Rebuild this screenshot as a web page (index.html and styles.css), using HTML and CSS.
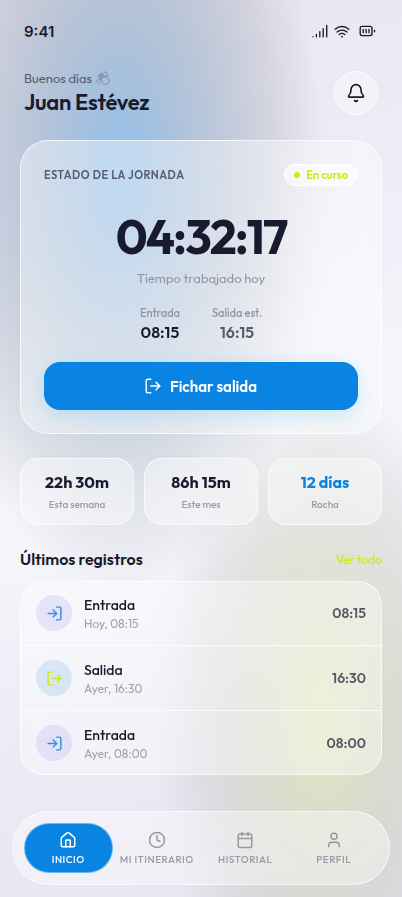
FILE: index.html
```html
<!DOCTYPE html>
<html lang="es">
<head>
<meta charset="utf-8">
<title>Jornada</title>
<link rel="stylesheet" href="styles.css">
</head>
<body>
<svg class="defs" width="0" height="0">
  <symbol id="log-in" viewBox="0 0 24 24"><path d="M15 3h4a2 2 0 0 1 2 2v14a2 2 0 0 1-2 2h-4"/><path d="m10 17 5-5-5-5"/><path d="M15 12H3"/></symbol>
  <symbol id="log-out" viewBox="0 0 24 24"><path d="M9 21H5a2 2 0 0 1-2-2V5a2 2 0 0 1 2-2h4"/><path d="m16 17 5-5-5-5"/><path d="M21 12H9"/></symbol>
</svg>
<div class="screen">
  <div class="status-bar">
    <span class="clock">9:41</span>
    <div class="status-icons">
      <svg class="signal" width="16" height="14" viewBox="0 0 16 14"><path d="M1 12.700v.1M4.400 10.500v2.300M7.800 7.700v5.100M11.200 4.700v8.100M14.700 1.400v11.400"/></svg>
      <svg class="wifi" width="16" height="14" viewBox="0 0 16 14"><path d="M1.200 5.200a10 10 0 0 1 13.600 0M3 8a7.400 7.400 0 0 1 10 0M5.200 10.500a4.400 4.400 0 0 1 5.600 0M7.700 12.700h.6"/></svg>
      <svg class="battery" width="17" height="12" viewBox="0 0 17 12"><rect x="1.200" y="1.400" width="11.800" height="9.200" rx="2"/><path d="M4.200 4.300v3.400M7.100 4.300v3.400M10 4.300v3.400M15.500 5.200v1.600"/></svg>
    </div>
  </div>

  <header class="header">
    <div>
      <div class="greeting">Buenos días
        <svg class="wave" width="14" height="14" viewBox="0 0 14 14"><path d="M4.500 8.200 2.400 5.600c-.6-.8.400-1.600 1.100-.8l2.400 2.700M5.900 7.500 3.700 3.900c-.5-.9.800-1.600 1.300-.7l2.300 3.500M7.300 6.700 5.600 3.300c-.4-.9.900-1.500 1.400-.6l2.500 4.100c.2-1.100.2-2.100 1.100-2.300 1-.2 1.300.6 1.100 1.500-.1 1.200 1.500 2.200 1.500 3.900 0 2-2 3.500-4.100 3.400-2.100-.1-3.300-1.700-5.600-4.300-.6-.8.400-1.600 1.100-.9l1.700 1.700M8.600.9c1.300.2 2.200.9 2.700 2.200M.8 8.900c.2 1.500 1.100 2.700 2.400 3.500"/></svg>
      </div>
      <h1 class="name">Juan Estévez</h1>
    </div>
    <button class="bell glass" aria-label="Avisos"><svg width="20" height="20" viewBox="0 0 24 24"><path d="M10.300 21a1.940 1.940 0 0 0 3.400 0"/><path d="M3.262 15.326A1 1 0 0 0 4 17h16a1 1 0 0 0 .74-1.673C19.410 13.956 18 12.499 18 8A6 6 0 0 0 6 8c0 4.499-1.411 5.956-2.738 7.326"/></svg></button>
  </header>

  <section class="glass workday">
    <div class="workday-head">
      <span class="workday-title">ESTADO DE LA JORNADA</span>
      <span class="pill"><i class="dot"></i>En curso</span>
    </div>
    <div class="timer">04:32:17</div>
    <div class="timer-note">Tiempo trabajado hoy</div>
    <div class="times">
      <div class="time"><span class="time-label">Entrada</span><span class="time-value">08:15</span></div>
      <div class="time"><span class="time-label">Salida est.</span><span class="time-value estimate">16:15</span></div>
    </div>
    <button class="clock-out"><svg width="18" height="18"><use href="#log-out"/></svg>Fichar salida</button>
  </section>

  <section class="stats">
    <div class="glass stat"><span class="stat-value">22h 30m</span><span class="stat-label">Esta semana</span></div>
    <div class="glass stat"><span class="stat-value">86h 15m</span><span class="stat-label">Este mes</span></div>
    <div class="glass stat"><span class="stat-value streak">12 días</span><span class="stat-label">Racha</span></div>
  </section>

  <div class="section-head"><h2>Últimos registros</h2><a class="more">Ver todo</a></div>

  <section class="glass log">
    <div class="entry">
      <span class="badge arrive"><svg width="17" height="17"><use href="#log-in"/></svg></span>
      <div class="entry-text"><span class="entry-title">Entrada</span><span class="entry-date">Hoy, 08:15</span></div>
      <span class="entry-time">08:15</span>
    </div>
    <div class="entry">
      <span class="badge leave"><svg width="17" height="17"><use href="#log-out"/></svg></span>
      <div class="entry-text"><span class="entry-title">Salida</span><span class="entry-date">Ayer, 16:30</span></div>
      <span class="entry-time">16:30</span>
    </div>
    <div class="entry">
      <span class="badge arrive"><svg width="17" height="17"><use href="#log-in"/></svg></span>
      <div class="entry-text"><span class="entry-title">Entrada</span><span class="entry-date">Ayer, 08:00</span></div>
      <span class="entry-time">08:00</span>
    </div>
  </section>

  <nav class="glass tabs">
    <a class="tab active"><svg width="18" height="18" viewBox="0 0 24 24"><path d="M15 21v-8a1 1 0 0 0-1-1h-4a1 1 0 0 0-1 1v8"/><path d="M3 10a2 2 0 0 1 .7-1.500l7-6a2 2 0 0 1 2.600 0l7 6A2 2 0 0 1 21 10v9a2 2 0 0 1-2 2H5a2 2 0 0 1-2-2z"/></svg><span>INICIO</span></a>
    <a class="tab"><svg width="18" height="18" viewBox="0 0 24 24"><circle cx="12" cy="12" r="10"/><path d="M12 6v6l4 2"/></svg><span>MI ITINERARIO</span></a>
    <a class="tab"><svg width="18" height="18" viewBox="0 0 24 24"><path d="M8 2v4M16 2v4M3 10h18"/><rect x="3" y="4" width="18" height="18" rx="2"/></svg><span>HISTORIAL</span></a>
    <a class="tab"><svg width="18" height="18" viewBox="0 0 24 24"><path d="M19 21v-2a4 4 0 0 0-4-4H9a4 4 0 0 0-4 4v2"/><circle cx="12" cy="7" r="4"/></svg><span>PERFIL</span></a>
  </nav>
</div>
</body>
</html>
```
FILE: styles.css
```css
* { box-sizing: border-box; margin: 0; }
body { width: 402px; height: 897px; overflow: hidden; font-family: Outfit, Lato, sans-serif; color: #1a1a2e; }
.defs { position: absolute; }
svg { fill: none; stroke: currentColor; stroke-width: 2; stroke-linecap: round; stroke-linejoin: round; flex: none; }
button { border: 0; font: inherit; color: inherit; padding: 0; }

.screen {
  height: 897px; display: flex; flex-direction: column; padding: 0 20px;
  background:
    radial-gradient(ellipse 205px 410px at 120px 180px, rgba(9,132,227,.4) 0%, rgba(8,112,193,.34) 15%, rgba(6,92,159,.28) 30%, rgba(5,73,125,.22) 45%, rgba(4,53,91,.16) 60%, rgba(2,33,57,.1) 75%, rgba(1,13,23,.04) 90%, transparent 100%),
    radial-gradient(ellipse 165px 350px at 322px 715px, rgba(206,235,0,.23) 0%, rgba(175,200,0,.195) 15%, rgba(144,165,0,.165) 30%, rgba(113,129,0,.135) 45%, rgba(82,94,0,.1) 60%, rgba(52,59,0,.065) 75%, rgba(21,24,0,.025) 90%, transparent 100%),
    linear-gradient(167deg, #e8e5f0 0%, #eeecf6 25%, #f6f7fc 52%, #ebe9f4 80%, #e8e5f0 100%);
}
.glass { background: rgba(255,255,255,.4); border: 1px solid rgba(255,255,255,.7); backdrop-filter: blur(12px); }

.status-bar { height: 62px; display: flex; align-items: center; justify-content: space-between; padding: 0 6px 0 4px; }
.clock { font: 600 15px Inter, sans-serif; }
.status-icons { display: flex; align-items: center; }
.status-icons svg { stroke-width: 1.35; }
.status-icons .wifi { margin-left: 6px; }
.status-icons .battery { margin-left: 9px; }

.header { height: 78px; display: flex; justify-content: space-between; padding: 9px 4px 0; }
.greeting { font-size: 13px; line-height: 16px; color: #5a5b70; display: flex; align-items: center; gap: 4px; margin-top: -1px; }
.wave { stroke-width: .6; opacity: .9; }
.name { font-size: 22px; font-weight: 600; line-height: 28px; letter-spacing: -.3px; margin-top: 2px; }
.bell { width: 44px; height: 44px; border-radius: 50%; display: grid; place-items: center; }

.workday { height: 294px; border-radius: 28px; padding: 23px; display: flex; flex-direction: column; }
.workday-head { display: flex; justify-content: space-between; align-items: center; height: 22px; }
.workday-title { font-size: 11px; font-weight: 600; letter-spacing: .5px; color: #5a5b70; }
.pill { height: 22px; display: flex; align-items: center; gap: 6px; padding: 0 9px; border: 1px solid #fff; border-radius: 11px; background: rgba(255,255,255,.6); font-size: 11px; font-weight: 600; color: #d0e80c; }
.dot { width: 6px; height: 6px; border-radius: 50%; background: #d0e80c; }
.timer { font-size: 48px; font-weight: 700; line-height: 60px; letter-spacing: -2px; text-align: center; margin-top: 20px; }
.timer-note { font-size: 13px; line-height: 16px; text-align: center; color: #9394a3; margin-top: 4px; }
.times { display: flex; justify-content: center; gap: 32px; margin-top: 20px; }
.time { display: flex; flex-direction: column; align-items: center; }
.time-label { font-size: 11px; line-height: 14px; font-weight: 500; color: #9394a3; }
.time-value { font-size: 16px; font-weight: 600; line-height: 20px; margin-top: 2px; }
.estimate { color: #5a5a6a; }
.clock-out { height: 48px; margin-top: auto; padding-right: 1px; border-radius: 16px; background: #0984e3; color: #fff; display: flex; align-items: center; justify-content: center; gap: 8px; font-size: 15px; font-weight: 600; box-shadow: 0 4px 20px rgba(116,205,245,.4); }

.stats { display: grid; grid-template-columns: repeat(3, 1fr); gap: 10px; margin-top: 24px; }
.stat { height: 67px; border-radius: 18px; display: flex; flex-direction: column; align-items: center; justify-content: center; gap: 6px; padding-bottom: 1px; }
.stat-value { font-size: 16px; font-weight: 700; line-height: 20px; }
.stat-label { font-size: 10px; line-height: 13px; font-weight: 500; letter-spacing: -.05px; color: #9c9da9; }
.streak { color: #0984e3; }

.section-head { height: 56px; padding-top: 12px; display: flex; align-items: center; justify-content: space-between; }
h2 { font-size: 16px; font-weight: 600; }
.more { font-size: 12px; color: #cfe800; }

.log { height: 194px; border-radius: 24px; }
.entry { height: 65px; display: flex; align-items: center; gap: 12px; padding: 0 15px; border-bottom: 1px solid rgba(255,255,255,.8); }
.entry:first-child { height: 64px; padding-bottom: 1px; }
.entry:last-child { border: 0; height: 63px; padding-top: 1px; }
.badge { width: 36px; height: 36px; border-radius: 50%; display: grid; place-items: center; }
.arrive { background: rgba(108,92,231,.13); color: #2f8fe8; }
.leave { background: rgba(9,132,227,.13); color: #d0e80c; }
.entry-text { flex: 1; display: flex; flex-direction: column; gap: 2px; }
.entry-title { font-size: 14px; font-weight: 500; line-height: 18px; }
.entry-date { font-size: 12px; line-height: 15px; color: #a0a0ac; }
.entry-time { font-size: 14px; font-weight: 600; color: #5a5a66; }

.tabs { height: 74px; margin: 36px -8px 0; padding: 11px; border-radius: 37px; display: grid; grid-template-columns: repeat(4, 1fr); align-items: center; }
.tab { height: 50px; border-radius: 25px; display: flex; flex-direction: column; align-items: center; justify-content: center; gap: 4px; font-size: 10px; line-height: 13px; font-weight: 500; letter-spacing: .5px; color: #9898a4; white-space: nowrap; }
.active { background: #0984e3; color: #fff; border: 1px solid rgba(255,255,255,.4); }
```
